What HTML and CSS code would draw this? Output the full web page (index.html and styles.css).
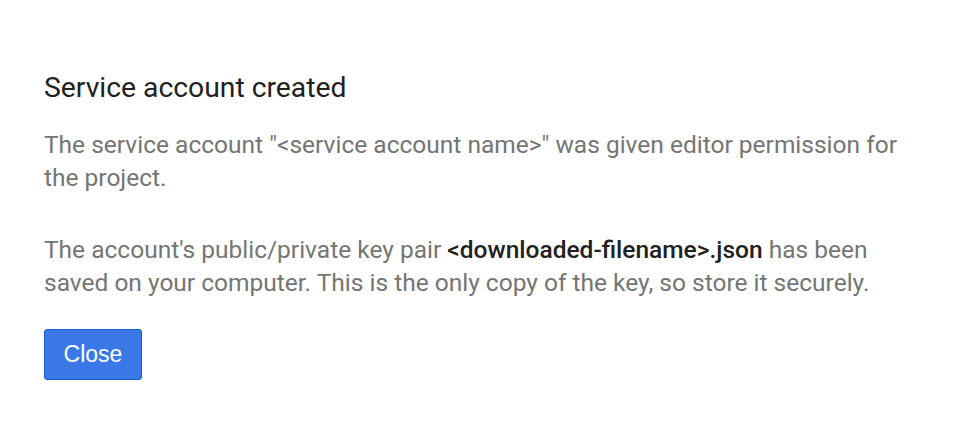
FILE: index.html
```html
<!DOCTYPE html>
<html lang="en">
<head>
    <meta charset="UTF-8">
    <meta name="viewport" content="width=device-width, initial-scale=1.0">
    <title>Service account created</title>
    <link rel="stylesheet" href="styles.css">
</head>
<body>
    <div class="dialog">
        <h2 class="dialog-title">Service account created</h2>
        <p class="dialog-text">The service account "&lt;service account name&gt;" was given editor permission for the project.</p>
        <p class="dialog-text">The account's public/private key pair <strong>&lt;downloaded-filename&gt;.json</strong> has been saved on your computer. This is the only copy of the key, so store it securely.</p>
        <div class="dialog-actions">
            <button class="btn-primary">Close</button>
        </div>
    </div>
</body>
</html>
```

FILE: styles.css
```css
body {
    margin: 0;
    background: #ffffff;
    font-family: 'Roboto', sans-serif;
}

.dialog {
    padding: 72px 44px 0 44px;
    width: 872px;
}

.dialog-title {
    margin: 0 0 24px 0;
    font-size: 28.3px;
    font-weight: 400;
    line-height: 32px;
    color: #212121;
}

.dialog-text {
    margin: 0 0 39px 0;
    font-size: 24.5px;
    line-height: 33px;
    color: #757575;
}

.dialog-text strong {
    font-weight: 500;
    color: #212121;
}

.dialog-actions {
    margin-top: -9px;
}

.btn-primary {
    width: 98px;
    height: 51px;
    padding: 0;
    background: #3b78e7;
    border: 1px solid #1a5bc9;
    border-radius: 3px;
    color: #ffffff;
    font-family: 'Liberation Sans', Arial, sans-serif;
    font-size: 23px;
    cursor: pointer;
}
```
